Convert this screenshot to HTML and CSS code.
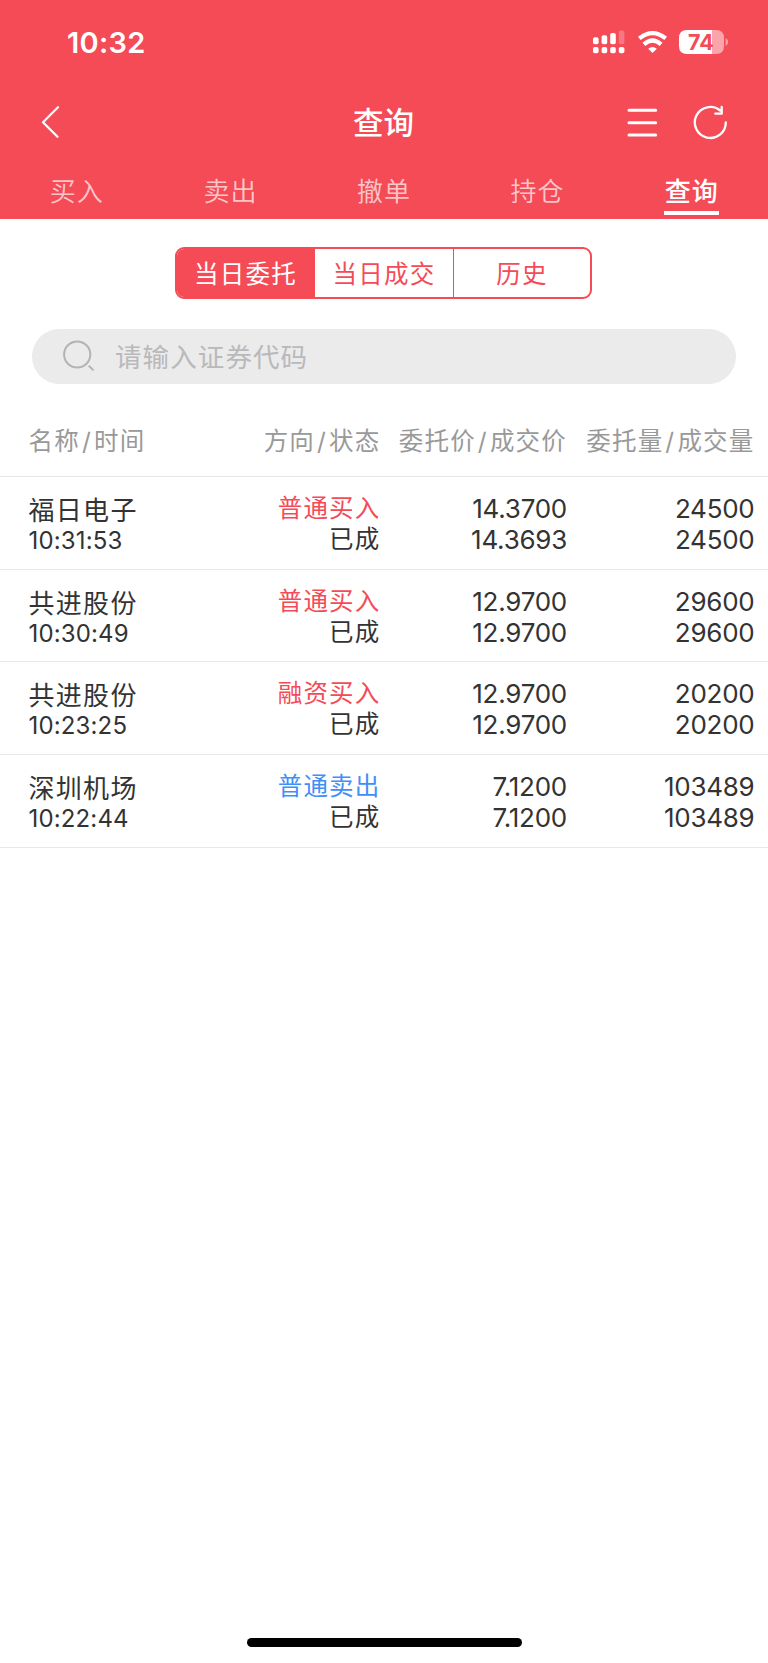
FILE: index.html
```html
<!DOCTYPE html>
<html lang="zh-CN">
<head>
<meta charset="utf-8">
<meta name="viewport" content="width=device-width">
<title>查询</title>
<link rel="stylesheet" href="styles.css">
</head>
<body>
<div class="screen">
  <header class="header">
    <div class="status">
      <span class="clock">10:32</span>
      <svg class="status-icons" width="138" height="28" viewBox="592 28 138 28">
        <g fill="#fff">
          <rect x="593" y="37.2" width="5.6" height="7" rx="1.8"/>
          <rect x="601.6" y="35.2" width="5.6" height="9" rx="1.8"/>
          <rect x="610.2" y="33" width="5.6" height="11.2" rx="1.8"/>
          <rect x="618.8" y="30.4" width="5.6" height="13.8" rx="1.8" opacity=".25"/>
          <rect x="593" y="47" width="5.6" height="6.3" rx="1.8"/>
          <rect x="601.6" y="47" width="5.6" height="6.3" rx="1.8"/>
          <rect x="610.2" y="47" width="5.6" height="6.3" rx="1.8"/>
          <rect x="618.8" y="47" width="5.6" height="6.3" rx="1.8"/>
          <path d="M652.5 53 L648.2 48.7 Q652.5 45.3 656.8 48.7 Z"/>
        </g>
        <g fill="none" stroke="#fff" stroke-width="4.2">
          <path d="M639.3 38.4 Q652.5 27.8 665.7 38.4"/>
          <path d="M643.9 44.4 Q652.5 36.6 661.1 44.4"/>
        </g>
        <path d="M687 30H712V54H687Q679 54 679 46V38Q679 30 687 30Z" fill="#fff"/>
        <path d="M712 30H716Q724 30 724 38V46Q724 54 716 54H712Z" fill="#fff" opacity=".5"/>
        <path d="M725.6 38Q728.2 39.4 728.2 42T725.6 46Z" fill="#fff" opacity=".5"/>
        <text class="battery-text" x="701" y="49.8" text-anchor="middle">74</text>
      </svg>
    </div>
    <div class="nav">
      <svg class="back" width="20" height="34" viewBox="41 105 20 34"><path d="M58 107.3 L43 122.2 L57.5 136.8"/></svg>
      <h1 class="title">查询</h1>
      <svg class="actions" width="104" height="38" viewBox="625 103 104 38">
        <path class="menu-lines" d="M629 110.3H655.7M629 122.7H655.7M629 135H655.7"/>
        <path d="M725.8 122.4A15.5 15.5 0 1 1 720.2 110.5M721.7 107V113.7H715.3"/>
      </svg>
    </div>
    <nav class="tabs">
      <span class="tab">买入</span><span class="tab">卖出</span><span class="tab">撤单</span><span class="tab">持仓</span><span class="tab active">查询</span>
    </nav>
  </header>
  <main>
    <div class="segments">
      <span class="segment selected">当日委托</span><span class="segment">当日成交</span><span class="segment">历史</span>
    </div>
    <div class="search">
      <svg width="34" height="34" viewBox="62 340 34 34"><circle cx="77.2" cy="355.5" r="13.1"/><path d="M88.8 366.8L93.5 371.4"/></svg>
      <span class="placeholder">请输入证券代码</span>
    </div>
    <div class="grid table-head">
      <span>名称<i>/</i>时间</span><span>方向<i>/</i>状态</span><span>委托价<i>/</i>成交价</span><span>委托量<i>/</i>成交量</span>
    </div>
    <div class="grid row">
      <div><p class="name">福日电子</p><p class="time">10:31:53</p></div>
      <div class="side"><p class="buy">普通买入</p><p>已成</p></div>
      <div class="num"><p>14.3700</p><p>14.3693</p></div>
      <div class="num"><p>24500</p><p>24500</p></div>
    </div>
    <div class="grid row">
      <div><p class="name">共进股份</p><p class="time">10:30:49</p></div>
      <div class="side"><p class="buy">普通买入</p><p>已成</p></div>
      <div class="num"><p>12.9700</p><p>12.9700</p></div>
      <div class="num"><p>29600</p><p>29600</p></div>
    </div>
    <div class="grid row">
      <div><p class="name">共进股份</p><p class="time">10:23:25</p></div>
      <div class="side"><p class="buy">融资买入</p><p>已成</p></div>
      <div class="num"><p>12.9700</p><p>12.9700</p></div>
      <div class="num"><p>20200</p><p>20200</p></div>
    </div>
    <div class="grid row">
      <div><p class="name">深圳机场</p><p class="time">10:22:44</p></div>
      <div class="side"><p class="sell">普通卖出</p><p>已成</p></div>
      <div class="num"><p>7.1200</p><p>7.1200</p></div>
      <div class="num"><p>103489</p><p>103489</p></div>
    </div>
  </main>
  <div class="home-bar"></div>
</div>
</body>
</html>
```

FILE: styles.css
```css
* { box-sizing: border-box; margin: 0; padding: 0; }
body { background: #fff; color: #333; font-family: Inter, "Noto Sans CJK SC", sans-serif; }
svg { display: block; flex: none; }
.screen { width: 768px; height: 1663px; display: flex; flex-direction: column; overflow: hidden; }
.header { height: 219px; background: #f54b57; color: #fff; flex: none; }
.status { height: 84px; display: flex; justify-content: space-between; align-items: center; padding: 0 38px 0 67px; }
.clock { font-size: 29px; font-weight: 600; line-height: 36px; letter-spacing: .3px; padding-top: 1px; }
.battery-text { font: 700 21.5px Inter, sans-serif; fill: #f54b57; letter-spacing: 0; }
.nav { height: 76px; display: grid; grid-template-columns: 1fr auto 1fr; align-items: center; padding: 0 39px 0 41px; }
.title { font-family: "Noto Sans CJK SC", sans-serif; font-size: 30.5px; font-weight: 500; line-height: 40px; padding: 0 3px 2px 0; }
.back, .actions { fill: none; stroke: #fff; stroke-width: 2.3; stroke-linecap: round; stroke-linejoin: round; }
.actions { justify-self: end; }
.menu-lines { stroke-width: 3; }
.tabs { height: 59px; display: grid; grid-template-columns: repeat(5, 1fr); justify-items: center; }
.tab { height: 55px; font-size: 26px; line-height: 60px; letter-spacing: 1px; color: rgba(255,255,255,.7); font-family: "Noto Sans CJK SC", sans-serif; font-weight: 350; }
.tab.active { color: #fff; font-weight: 500; border-bottom: 4px solid #fff; padding-left: 1px; }
.segments { width: 417px; height: 52px; margin: 28px auto 0 175px; border: 2px solid #f54b57; border-radius: 9px; display: grid; grid-template-columns: 137px 139px 1fr; overflow: hidden; }
.segment { display: flex; align-items: center; justify-content: center; color: #f54b57; font-size: 24.5px; letter-spacing: 1.2px; padding-bottom: 2px; }
.segment + .segment { border-left: 1.5px solid #f54b57; }
.segment.selected { background: #f54b57; color: #fff; }
.search { height: 55.5px; margin: 29.5px 32px 0; background: #ebebeb; border-radius: 28px; display: flex; align-items: center; gap: 19px; padding-left: 30px; color: #b9b9bb; font-size: 26.5px; letter-spacing: 1.1px; }
.placeholder { padding-bottom: 2px; }
.search svg { fill: none; stroke: #b3b3b3; stroke-width: 2; }
.grid { display: grid; grid-template-columns: 176px 176px 186.5px 187.5px; padding-left: 28.5px; }
.grid > * { white-space: nowrap; }
.grid > *:not(:first-child) { text-align: right; }
.table-head { height: 93px; padding-top: 40px; font-size: 24.5px; line-height: 34px; letter-spacing: 1.2px; color: #999; border-bottom: 1.5px solid #e6e6e6; }
.table-head i { font-style: normal; margin: 0 2px; }
.row { height: 92.7px; padding-top: 16px; border-bottom: 1.5px solid #e8e8e8; line-height: 31px; }
.name { font-size: 26px; letter-spacing: 1.3px; line-height: 35px; }
.time { font-size: 24px; font-weight: 370; line-height: 26px; letter-spacing: .15px; }
.side { font-size: 24.5px; letter-spacing: 1.2px; }
.num { font-size: 26px; font-weight: 370; letter-spacing: -.25px; }
.buy { color: #f54b57; }
.sell { color: #3f8ff7; }
.home-bar { width: 275px; height: 9px; border-radius: 5px; background: #000; margin: auto 246px 16px 247px; }
```
